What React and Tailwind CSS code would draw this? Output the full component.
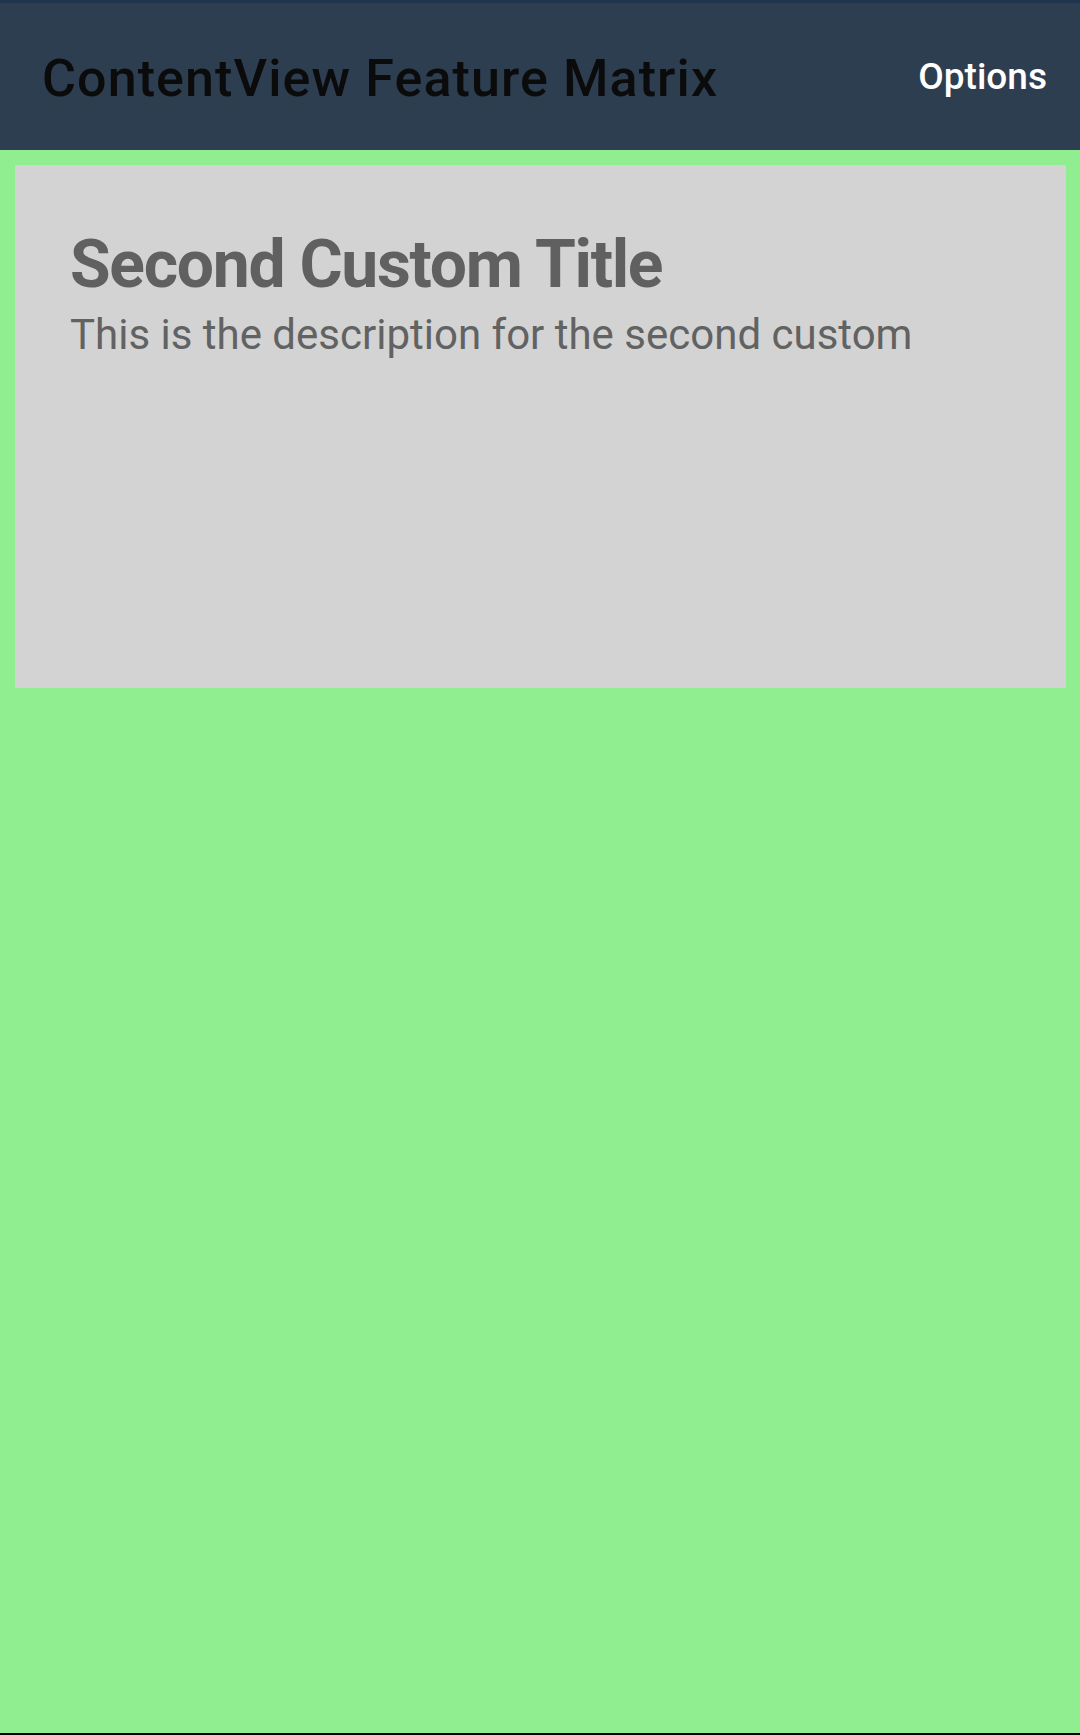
import React from 'react';

const App = () => {
  return (
    <div className="flex h-[1735px] w-[1080px] flex-col bg-[#90ee90] font-['Roboto',sans-serif]">
      {/* Header */}
      <div className="flex h-[150px] shrink-0 items-center justify-between border-t-[3px] border-[#1f344d] bg-[#2d3e50] pl-[42px] pr-[33px]">
        <h1 className="mt-[4px] text-[52px] leading-none font-medium tracking-[1.1px] text-[#0b0b0b]">ContentView Feature Matrix</h1>
        <button className="text-[37px] leading-none font-medium text-white">Options</button>
      </div>

      {/* Card */}
      <div className="mt-[15px] ml-[15px] mr-[14px] h-[523px] bg-[#d3d3d3] pl-[55px] pt-[67px]">
        <h2 className="text-[66px] leading-none font-bold tracking-[-1.3px] text-[#606060]">Second Custom Title</h2>
        <p className="mt-[16px] text-[42px] leading-none text-[#626262]">This is the description for the second custom</p>
      </div>

      <div className="flex-1" />
      <div className="h-[2px] bg-black" />
    </div>
  );
};

export default App;
